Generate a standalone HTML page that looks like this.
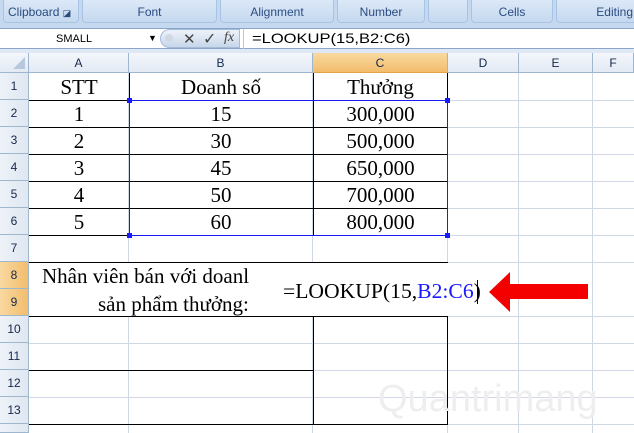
<!DOCTYPE html>
<html><head><meta charset="utf-8"><style>
*{margin:0;padding:0;box-sizing:border-box}
body{width:634px;height:433px;overflow:hidden;position:relative;background:#fff;font-family:"Liberation Sans",sans-serif}
.abs{position:absolute}
.rib{top:0;left:0;width:634px;height:28px;background:#c4d8ef}
.grp{top:0;height:23px;background:linear-gradient(#dbe8f7,#c6d9f0);border:1px solid #a9c3e3;border-top:none;border-radius:0 0 4px 4px;font-size:12px;color:#2a4c80;text-align:center;line-height:24px}
.fbar{top:28px;left:0;width:634px;height:21px;background:#fff;border-top:1px solid #8ba5c8;border-bottom:1px solid #8ba5c8}
.strip{top:49px;left:0;width:634px;height:4px;background:#dfe8f5}
.hdr{top:53px;height:20px;background:linear-gradient(#f3f6fb,#e3eaf4);border-right:1px solid #9eb6ce;border-bottom:1px solid #9eb6ce;font-size:12px;color:#15284b;text-align:center;line-height:20px}
.rh{left:0;width:29px;height:27px;background:linear-gradient(90deg,#eef2f8,#dfe7f1);border-bottom:1px solid #9eb6ce;border-right:1px solid #9eb6ce;font-size:12px;color:#15284b;text-align:center;line-height:27px}
.gh{left:29px;width:605px;height:1px;background:#d0d7e5}
.gv{top:73px;width:1px;height:360px;background:#d0d7e5}
.bk{background:#000}
.t{font-family:"Liberation Serif",serif;font-size:21px;color:#000;text-align:center;line-height:27px}
</style></head><body>
<div class="abs rib"></div>
<div class="abs grp" style="left:3px;width:76px;text-align:left;padding-left:4px">Clipboard <span style="font-size:9px">◪</span></div>
<div class="abs grp" style="left:82px;width:135px">Font</div>
<div class="abs grp" style="left:220px;width:114px">Alignment</div>
<div class="abs grp" style="left:337px;width:88px">Number</div>
<div class="abs grp" style="left:428px;width:40px"></div>
<div class="abs grp" style="left:471px;width:82px">Cells</div>
<div class="abs grp" style="left:556px;width:90px;text-align:right;padding-right:12px">Editing</div>
<div class="abs fbar"></div>
<div class="abs" style="left:56px;top:33px;font-size:11px">SMALL</div>
<div class="abs" style="left:148px;top:33px;font-size:9px">▼</div>
<div class="abs" style="left:160px;top:29px;width:80px;height:19px;border-radius:10px 0 0 10px;background:linear-gradient(#eef3fa,#c7d6ea);border:1px solid #a5bcd8"></div>
<div class="abs" style="left:165px;top:34px;width:8px;height:8px;border-radius:50%;background:#d0d8e4"></div>
<div class="abs" style="left:183px;top:30px;font-size:15px;color:#444">✕</div>
<div class="abs" style="left:203px;top:29px;font-size:16px;color:#444">✓</div>
<div class="abs" style="left:224px;top:30px;font-family:'Liberation Serif',serif;font-style:italic;font-size:14px;color:#444">fx</div>
<div class="abs" style="left:243px;top:29px;width:1px;height:20px;background:#b8c8dc"></div>
<div class="abs" style="left:252px;top:30px;font-size:14px;transform:scaleX(1.18);transform-origin:left">=LOOKUP(15,B2:C6)</div>
<div class="abs strip"></div>
<div class="abs hdr" style="left:0;width:29px"><div style="position:absolute;right:3px;bottom:3px;width:0;height:0;border-left:12px solid transparent;border-bottom:12px solid #b8c8dc"></div></div>
<div class="abs hdr" style="left:29px;width:100px">A</div>
<div class="abs hdr" style="left:129px;width:184px">B</div>
<div class="abs hdr" style="left:313px;width:135px;background:linear-gradient(#f9d9a0,#f2bd6c);border-bottom:1px solid #e4a24a">C</div>
<div class="abs hdr" style="left:448px;width:71px">D</div>
<div class="abs hdr" style="left:519px;width:74px">E</div>
<div class="abs hdr" style="left:593px;width:41px">F</div>
<div class="abs gh" style="top:100px"></div><div class="abs gh" style="top:127px"></div><div class="abs gh" style="top:154px"></div><div class="abs gh" style="top:181px"></div><div class="abs gh" style="top:208px"></div><div class="abs gh" style="top:235px"></div><div class="abs gh" style="top:262px"></div><div class="abs gh" style="top:316px"></div><div class="abs gh" style="top:343px"></div><div class="abs gh" style="top:370px"></div><div class="abs gh" style="top:397px"></div><div class="abs gh" style="top:424px"></div>
<div class="abs gv" style="left:128px"></div><div class="abs gv" style="left:312px"></div><div class="abs gv" style="left:447px"></div><div class="abs gv" style="left:518px"></div><div class="abs gv" style="left:592px"></div>
<div class="abs rh" style="top:73px">1</div><div class="abs rh" style="top:100px">2</div><div class="abs rh" style="top:127px">3</div><div class="abs rh" style="top:154px">4</div><div class="abs rh" style="top:181px">5</div><div class="abs rh" style="top:208px">6</div><div class="abs rh" style="top:235px">7</div>
<div class="abs rh" style="top:262px;background:linear-gradient(90deg,#f9d9a0,#f2bd6c)">8</div><div class="abs rh" style="top:289px;background:linear-gradient(90deg,#f9d9a0,#f2bd6c)">9</div>
<div class="abs rh" style="top:316px">10</div><div class="abs rh" style="top:343px">11</div><div class="abs rh" style="top:370px">12</div><div class="abs rh" style="top:397px">13</div><div class="abs rh" style="top:424px;height:9px"></div>
<div class="abs bk" style="left:29px;top:100px;width:419px;height:1px"></div>
<div class="abs bk" style="left:29px;top:127px;width:419px;height:1px"></div>
<div class="abs bk" style="left:29px;top:154px;width:419px;height:1px"></div>
<div class="abs bk" style="left:29px;top:181px;width:419px;height:1px"></div>
<div class="abs bk" style="left:29px;top:208px;width:419px;height:1px"></div>
<div class="abs bk" style="left:29px;top:235px;width:419px;height:1px"></div>
<div class="abs bk" style="left:129px;top:73px;width:1px;height:162px"></div>
<div class="abs bk" style="left:313px;top:73px;width:1px;height:162px"></div>
<div class="abs bk" style="left:447px;top:73px;width:1px;height:162px"></div>
<div class="abs" style="left:129px;top:100px;width:319px;height:136px;border:1px solid #1a1aff"></div>
<div class="abs" style="left:127px;top:98px;width:5px;height:5px;background:#1a1aff"></div>
<div class="abs" style="left:445px;top:98px;width:5px;height:5px;background:#1a1aff"></div>
<div class="abs" style="left:127px;top:233px;width:5px;height:5px;background:#1a1aff"></div>
<div class="abs" style="left:445px;top:233px;width:5px;height:5px;background:#1a1aff"></div>
<div class="abs t" style="left:29px;top:74px;width:100px">STT</div>
<div class="abs t" style="left:129px;top:74px;width:184px">Doanh số</div>
<div class="abs t" style="left:313px;top:74px;width:135px">Thưởng</div>
<div class="abs t" style="left:29px;top:101px;width:100px">1</div><div class="abs t" style="left:129px;top:101px;width:184px">15</div><div class="abs t" style="left:313px;top:101px;width:135px">300,000</div>
<div class="abs t" style="left:29px;top:128px;width:100px">2</div><div class="abs t" style="left:129px;top:128px;width:184px">30</div><div class="abs t" style="left:313px;top:128px;width:135px">500,000</div>
<div class="abs t" style="left:29px;top:155px;width:100px">3</div><div class="abs t" style="left:129px;top:155px;width:184px">45</div><div class="abs t" style="left:313px;top:155px;width:135px">650,000</div>
<div class="abs t" style="left:29px;top:182px;width:100px">4</div><div class="abs t" style="left:129px;top:182px;width:184px">50</div><div class="abs t" style="left:313px;top:182px;width:135px">700,000</div>
<div class="abs t" style="left:29px;top:209px;width:100px">5</div><div class="abs t" style="left:129px;top:209px;width:184px">60</div><div class="abs t" style="left:313px;top:209px;width:135px">800,000</div>
<div class="abs" style="left:29px;top:263px;width:419px;height:53px;background:#fff"></div>
<div class="abs bk" style="left:29px;top:262px;width:419px;height:1px"></div>
<div class="abs bk" style="left:29px;top:316px;width:419px;height:1px"></div>
<div class="abs bk" style="left:29px;top:370px;width:284px;height:1px"></div>
<div class="abs bk" style="left:29px;top:424px;width:419px;height:1px"></div>
<div class="abs bk" style="left:313px;top:316px;width:1px;height:108px"></div>
<div class="abs bk" style="left:447px;top:316px;width:1px;height:108px"></div>
<div class="abs t" style="left:42px;top:263px;text-align:left;white-space:nowrap">Nhân viên bán với doanl</div>
<div class="abs t" style="left:98px;top:291px;text-align:left;white-space:nowrap">sản phẩm thưởng:</div>
<div class="abs t" style="left:283px;top:278px;text-align:left;white-space:nowrap;transform:scaleX(1.03);transform-origin:left">=LOOKUP(15,<span style="color:#1a1aff">B2:C6</span>)</div>
<div class="abs bk" style="left:477px;top:280px;width:1px;height:24px"></div>
<svg class="abs" style="left:485px;top:268px" width="110" height="50"><polygon points="4,24 25,4 25,16 103,16 103,31 25,31 25,44" fill="#f40000"/></svg>
<div class="abs" style="left:378px;top:378px;font-size:38px;color:#eeeeee;font-family:'Liberation Sans',sans-serif">Quantrimang</div>
</body></html>
